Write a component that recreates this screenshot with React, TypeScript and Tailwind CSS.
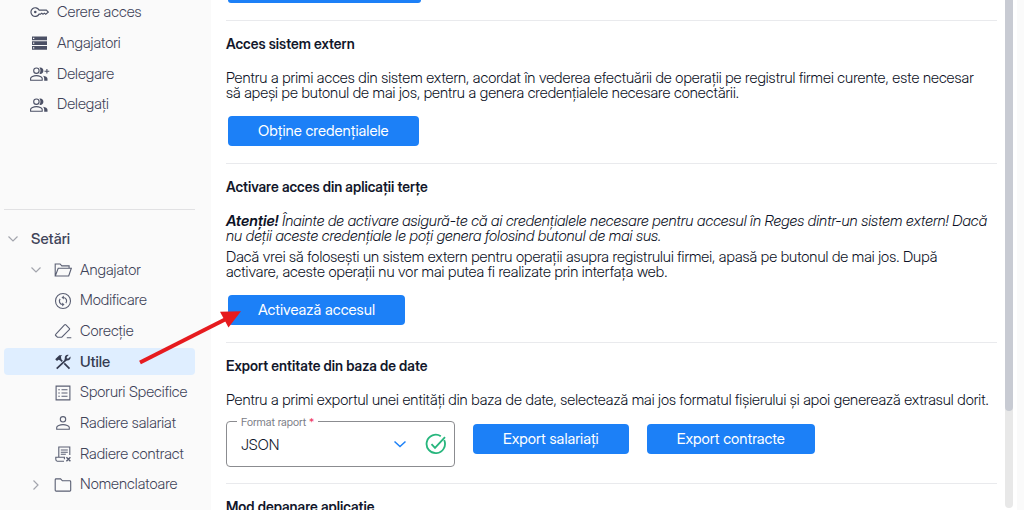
import type { ReactNode } from "react";

type IconProps = { children: ReactNode; className?: string };

function Icon({ children, className = "size-[18px]" }: IconProps) {
  return (
    <svg
      viewBox="0 0 18 18"
      className={`${className} shrink-0`}
      fill="none"
      stroke="currentColor"
      strokeWidth="1.1"
      aria-hidden="true"
    >
      {children}
    </svg>
  );
}

const KeyIcon = () => (
  <Icon className="h-5 w-[19px]">
    <path d="M8.6 7.200A4.100 4.100 0 1 0 8.600 11H10l1.100-.9 1.200 1 1.300-1 1.300 1 2.400-2-1.800-1.900z" />
    <circle cx="5" cy="9.100" r="1.200" fill="currentColor" stroke="none" />
  </Icon>
);

const ServersIcon = () => (
  <Icon>
    <path
      fill="currentColor"
      stroke="none"
      fillRule="evenodd"
      d="M2 2.500h15v3.700H2zM3 3.700v1.300h1.300V3.700zM2 7.300h15V11H2zM3 8.500v1.300h1.300V8.500zM2 12.100h15v3.700H2zM3 13.300v1.300h1.300v-1.300z"
    />
  </Icon>
);

function PeopleShapes() {
  return (
    <>
      <circle cx="6.400" cy="5.700" r="2.700" />
      <path d="M.6 15.300v-1.900c0-1.600 3-2.800 5.800-2.800s5.800 1.200 5.800 2.800v1.900z" />
      <path
        fill="currentColor"
        stroke="none"
        d="M9.400 2.600c2.400-.5 4 1.100 4 3.100s-1.600 3.600-4 3.100c1.400-1.800 1.400-4.400 0-6.200zM13 10.700c2.600.4 4.500 1.500 4.500 3.100v2h-3.300v-2.200c0-1.200-.4-2.200-1.200-2.900z"
      />
    </>
  );
}

const PeoplePlusIcon = () => (
  <svg viewBox="0 0 20 18" className="h-[18px] w-5 shrink-0" fill="none" stroke="currentColor" strokeWidth="1.100" aria-hidden="true">
    <PeopleShapes />
    <path d="M14.500 6.300h4.800M16.900 4v4.600" />
  </svg>
);

const PeopleIcon = () => (
  <Icon>
    <PeopleShapes />
  </Icon>
);

const FolderOpenIcon = () => (
  <Icon>
    <path d="M3.500 15H1.200V3h4.900l1.700 1.900h7.300v2.400M1.300 15 4.200 7.300h13.100L14.700 15z" />
  </Icon>
);

const FolderIcon = () => (
  <Icon>
    <path d="M1.200 14.200V3.800q0-.9.900-.9h4.500l1.800 1.900h7.400q.9 0 .9.900v8.500q0 .9-.9.900H2.100q-.9 0-.9-.9z" />
  </Icon>
);

const SyncIcon = () => (
  <Icon>
    <circle cx="9" cy="9" r="7.500" />
    <path
      strokeWidth="1.200"
      d="M9.200 5.500h.3a3.500 3.500 0 0 1 2.400 5.600M8.800 12.500h-.3a3.500 3.500 0 0 1-2.400-5.600"
    />
    <path fill="currentColor" stroke="none" d="M9.800 3.600v3.800L7.500 5.500zM8.200 10.600v3.800l2.300-1.900z" />
  </Icon>
);

const EraserIcon = () => (
  <Icon>
    <path d="M3.400 15.200 1.700 13.500q-.6-.6 0-1.200L10.500 2.900q.7-.7 1.400 0l3.400 3.400q.7.700 0 1.400l-7.500 7.500zM12.800 15.700h4.500" />
  </Icon>
);

const ToolsIcon = () => (
  <Icon>
    <path strokeWidth="1.700" d="M2.700 15.700 12 6.900M10.300 10.400l5.200 5.200M5.300 5.300l2.900 3" />
    <path
      fill="currentColor"
      stroke="none"
      d="M1.200 6.300 5.300 2.200h3L6.900 3.500l.4 2.200-1.500 1.500L4.600 6.700 3 8.100zM14.700 1.900l-2 2 .2 1.500 1.500.2 2-2c.7 2.300-1.200 4.300-3.500 3.900l-1.500.4-1-1 .4-1.500c-.4-2.300 1.600-4.200 3.900-3.500z"
    />
  </Icon>
);

const ListIcon = () => (
  <Icon>
    <path d="M2.100 2.100h13.800v13.800H2.100z" />
    <path d="M7.500 5.700h6M7.500 9h6M7.500 12.300h6M4.300 5.700h1.500M4.300 9h1.500M4.300 12.300h1.500" />
  </Icon>
);

const PersonIcon = () => (
  <Icon>
    <circle cx="9" cy="5.300" r="2.700" />
    <path d="M2.700 15.200v-1.800c0-1.600 3.300-2.800 6.300-2.800s6.300 1.200 6.300 2.800v1.800z" />
  </Icon>
);

const ContractIcon = () => (
  <Icon>
    <path d="M4.800 12.300V2h11v8M10 16.200H3.300q-1.500 0-1.500-1.900v-2h8.600v2M6.800 5h7M6.800 7.200h7M6.800 9.300h5" />
    <path strokeWidth="1.400" d="m12.400 12.200 4 4M16.400 12.200l-4 4" />
  </Icon>
);

function Chevron({ open = false }: { open?: boolean }) {
  return (
    <svg
      viewBox="0 0 12 12"
      className="size-3 shrink-0 text-[#a3a5ad]"
      fill="none"
      stroke="currentColor"
      strokeWidth="1.200"
      aria-hidden="true"
    >
      <path d={open ? "M1.500 3.500 6 8l4.500-4.500" : "M3.500 1.500 8 6l-4.500 4.500"} />
    </svg>
  );
}

const shortcuts = [
  { label: "Cerere acces", icon: <KeyIcon /> },
  { label: "Angajatori", icon: <ServersIcon /> },
  { label: "Delegare", icon: <PeoplePlusIcon /> },
  { label: "Delegați", icon: <PeopleIcon /> },
];

const employerPages = [
  { label: "Modificare", icon: <SyncIcon /> },
  { label: "Corecție", icon: <EraserIcon /> },
  { label: "Utile", icon: <ToolsIcon />, active: true },
  { label: "Sporuri Specifice", icon: <ListIcon /> },
  { label: "Radiere salariat", icon: <PersonIcon /> },
  { label: "Radiere contract", icon: <ContractIcon /> },
];

function Sidebar() {
  return (
    <nav className="flex w-[211px] shrink-0 flex-col bg-[#fafafa] pr-4 pl-1 text-[15px] text-[#3f4459]">
      <ul className="-mt-[3px] grid h-[123px] auto-rows-fr">
        {shortcuts.map((item) => (
          <li key={item.label} className="flex items-center">
            <a href="#" className="flex items-center pl-[26px]">
              <span className="flex w-[27px] text-[#4b5065]">{item.icon}</span>
              {item.label}
            </a>
          </li>
        ))}
      </ul>
      <hr className="mt-[89px] border-[#e1e1e3]" />
      <ul className="grid flex-1 auto-rows-fr grid-cols-1 pt-[14px] pb-[10px]">
        <li className="flex items-center">
          <button type="button" className="flex items-center gap-3 pl-[3px] font-medium">
            <Chevron open />
            Setări
          </button>
        </li>
        <li className="flex items-center">
          <button type="button" className="flex items-center pl-[26px]">
            <Chevron open />
            <span className="ml-3 flex w-[26px] text-[#5a5f73]">
              <FolderOpenIcon />
            </span>
            Angajator
          </button>
        </li>
        {employerPages.map((item) => (
          <li key={item.label} className="flex items-center">
            <a
              href="#"
              className={`flex h-[27px] w-full items-center rounded-[4px] pl-[50px] whitespace-nowrap ${
                item.active ? "bg-[#dfeeff] font-medium text-[#353b50]" : ""
              }`}
            >
              <span className={`flex w-[26px] ${item.active ? "text-[#353b50]" : "text-[#5a5f73]"}`}>{item.icon}</span>
              {item.label}
            </a>
          </li>
        ))}
        <li className="flex items-center">
          <button type="button" className="flex items-center pl-[26px]">
            <Chevron />
            <span className="ml-3 flex w-[26px] text-[#5a5f73]">
              <FolderIcon />
            </span>
            Nomenclatoare
          </button>
        </li>
      </ul>
    </nav>
  );
}

function ActionButton({ children, className = "" }: { children: ReactNode; className?: string }) {
  return (
    <button
      type="button"
      className={`h-[30px] shrink-0 rounded-[4px] bg-[#1c80f7] px-[30px] text-[15px] leading-5 font-normal whitespace-nowrap text-white ${className}`}
    >
      {children}
    </button>
  );
}

function Section({ title, children }: { title: string; children?: ReactNode }) {
  return (
    <section className="border-t border-[#e9eaed] pt-[13px]">
      <h2 className="mb-4 text-[14px] leading-5 font-semibold text-[#12172b]">{title}</h2>
      {children}
    </section>
  );
}

function FormatSelect() {
  return (
    <div className="relative h-[46px] w-[229px] shrink-0 rounded-[4px] border border-[#8b8c90]">
      <label
        htmlFor="format"
        className="absolute -top-2 left-[10px] bg-white px-1 text-[11px] leading-4 font-normal whitespace-nowrap text-[#7b7d86]"
      >
        Format raport <span className="text-[#f0345c]">*</span>
      </label>
      <select id="format" className="size-full appearance-none bg-transparent pl-[14px] text-[15px] text-[#12172b]">
        <option>JSON</option>
      </select>
      <svg
        viewBox="0 0 12 8"
        className="pointer-events-none absolute top-[18px] right-12 h-2 w-3"
        fill="none"
        stroke="#1c80f7"
        strokeWidth="1.500"
        aria-hidden="true"
      >
        <path d="m.5 1.500 5.500 5 5.500-5" />
      </svg>
      <svg
        viewBox="0 0 22 22"
        className="pointer-events-none absolute top-[11px] right-[7px] size-[22px]"
        fill="none"
        stroke="#27b67d"
        strokeWidth="1.800"
        aria-hidden="true"
      >
        <path d="M19.200 7.200A9.200 9.200 0 1 1 15.800 3.200M6.500 11.200l3.500 3.700L20 4.200" />
      </svg>
    </div>
  );
}

export default function App() {
  return (
    <div className="relative flex h-screen overflow-hidden bg-white font-['Inter_Display','Inter',sans-serif] font-light text-[#0d1226]">
      <Sidebar />
      <main className="min-w-0 flex-1 overflow-hidden pr-2 pl-[15px] text-[15px] leading-[15px]">
        <div className="mb-[17px] ml-[2px] h-[3px] w-[193px] rounded-b-[4px] bg-[#1c80f7]" />

        <Section title="Acces sistem extern">
          <p className="pr-2">
            Pentru a primi acces din sistem extern, acordat în vederea efectuării de operații pe registrul firmei curente, este necesar să apeși pe butonul de mai jos, pentru a genera credențialele necesare conectării.
          </p>
          <ActionButton className="mt-4 mb-[17px] ml-[2px] block">Obține credențialele</ActionButton>
        </Section>

        <Section title="Activare acces din aplicații terțe">
          <p className="pr-2 italic">
            <strong className="font-semibold">Atenție!</strong> Înainte de activare asigură-te că ai credențialele necesare pentru accesul în Reges dintr-un sistem extern! Dacă nu deții aceste credențiale le poți genera folosind butonul de mai sus.
          </p>
          <p className="pt-[6px] pr-2">
            Dacă vrei să folosești un sistem extern pentru operații asupra registrului firmei, apasă pe butonul de mai jos. După activare, aceste operații nu vor mai putea fi realizate prin interfața web.
          </p>
          <ActionButton className="mt-4 mb-[17px] ml-[2px] block">Activează accesul</ActionButton>
        </Section>

        <Section title="Export entitate din baza de date">
          <p>
            Pentru a primi exportul unei entități din baza de date, selectează mai jos formatul fișierului și apoi generează extrasul dorit.
          </p>
          <div className="mt-[14px] mb-4 flex items-start gap-[18px]">
            <FormatSelect />
            <ActionButton className="mt-[3px]">Export salariați</ActionButton>
            <ActionButton className="mt-[3px]">Export contracte</ActionButton>
          </div>
        </Section>

        <Section title="Mod depanare aplicație" />
      </main>

      <div className="mr-1 flex w-2 shrink-0 flex-col pb-[2px]">
        <div className="flex-1 rounded-b bg-[#e8e8e8]">
          <div className="h-[81%] rounded-b bg-[#c8cbd3]" />
        </div>
      </div>
      <div className="w-[7px] shrink-0 bg-[#fafafa]" />

      <svg viewBox="0 0 108 60" className="pointer-events-none absolute top-[306px] left-[136px] h-[60px] w-[108px]" aria-hidden="true">
        <path d="M4 56.500 90 13" stroke="#e61b1f" strokeWidth="4" />
        <path d="M105 5.300 84 5.700 92.500 21.500z" fill="#e61b1f" />
      </svg>
    </div>
  );
}
